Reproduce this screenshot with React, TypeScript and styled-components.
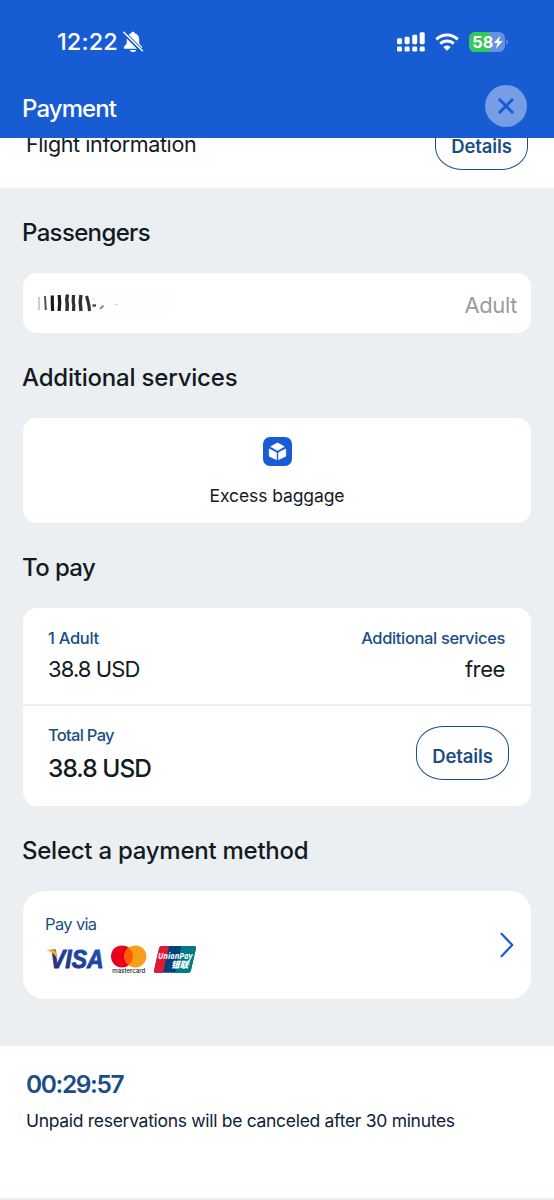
import React from 'react';
import styled, { createGlobalStyle } from 'styled-components';

const GlobalStyle = createGlobalStyle`
  * { box-sizing: border-box; }
  body {
    margin: 0;
    background: #fff;
    font-family: Inter, "Liberation Sans", sans-serif;
    color: #121b22;
    -webkit-font-smoothing: antialiased;
  }
`;

const Screen = styled.div`
  width: 554px;
  height: 1200px;
  display: flex;
  flex-direction: column;
  overflow: hidden;
  background: #fff;
`;

const Header = styled.header`
  height: 138px;
  flex: none;
  background: #175cd3;
  color: #fff;
`;

const StatusBar = styled.div`
  height: 82px;
  padding: 1px 46px 0 57px;
  display: flex;
  align-items: center;
  justify-content: space-between;
`;

const StatusGroup = styled.div<{ $gap: number }>`
  display: flex;
  align-items: center;
  gap: ${(p) => p.$gap}px;
`;

const TitleBar = styled.div`
  height: 48px;
  padding: 0 27px 0 22px;
  display: flex;
  align-items: center;
  justify-content: space-between;
`;

const CloseButton = styled.button`
  width: 42px;
  height: 42px;
  padding: 0;
  border: 0;
  border-radius: 50%;
  background: #779de5;
  display: grid;
  place-items: center;
`;

interface TextProps {
  $size: number;
  $weight?: number;
  $track?: number;
  $line?: number;
  $color?: string;
}

const Text = styled.span<TextProps>`
  display: block;
  white-space: nowrap;
  font-size: ${(p) => p.$size}px;
  font-weight: ${(p) => p.$weight ?? 400};
  letter-spacing: ${(p) => p.$track ?? 0}px;
  line-height: ${(p) => p.$line ?? 30}px;
  color: ${(p) => p.$color ?? 'inherit'};
`;

const PageTitle = styled(Text)`
  padding-top: 5px;
`;

const FlightRow = styled.section`
  height: 50px;
  flex: none;
  padding: 0 26px 18px;
  display: flex;
  align-items: flex-end;
  justify-content: space-between;
  overflow: hidden;
`;

const FlightLabel = styled(Text)`
  margin-bottom: 11px;
`;

const DetailsButton = styled.button`
  flex: none;
  width: 93px;
  height: 54px;
  padding: 5px 0 0;
  border: 1.5px solid #1a4f86;
  border-radius: 27px / 23px;
  background: #fff;
  color: #1a4f86;
  font: 600 18.5px/30px Inter, sans-serif;
  letter-spacing: -0.1px;
`;

const Main = styled.main`
  height: 858px;
  flex: none;
  padding: 0 23px;
  background: #ebeff2;
`;

const Heading = styled.h2<{ $track: number }>`
  margin: 0 0 0 -1px;
  height: 85px;
  padding-top: 5px;
  display: flex;
  align-items: center;
  font-size: 24px;
  font-weight: 500;
  line-height: 30px;
  letter-spacing: ${(p) => p.$track}px;
`;

const Card = styled.section<{ $height: number; $radius?: number }>`
  width: 508px;
  height: ${(p) => p.$height}px;
  border-radius: ${(p) => p.$radius ?? 14}px;
  background: #fff;
`;

const PassengerCard = styled(Card)`
  padding: 4px 14px 0 12px;
  display: flex;
  align-items: center;
  justify-content: space-between;
`;

const ServiceCard = styled(Card)`
  padding-top: 19px;
  display: flex;
  flex-direction: column;
  align-items: center;
  gap: 15px;
`;

const PriceRow = styled.div<{ $height: number; $pad: string }>`
  height: ${(p) => p.$height}px;
  padding: ${(p) => p.$pad};
  display: flex;
  justify-content: space-between;
  & + & { border-top: 2px solid #eceef0; }
`;

const PriceCell = styled.div<{ $end?: boolean; $gap: number }>`
  display: flex;
  flex-direction: column;
  align-items: ${(p) => (p.$end ? 'flex-end' : 'flex-start')};
  gap: ${(p) => p.$gap}px;
`;

const TotalCell = styled(PriceCell)`
  margin-top: -1px;
`;

const MethodCard = styled(Card)`
  padding: 0 17px 0 22px;
  display: flex;
  align-items: center;
  justify-content: space-between;
`;

const MethodInfo = styled.div`
  margin-top: -2px;
  display: flex;
  flex-direction: column;
  gap: 8px;
`;

const Footer = styled.footer`
  flex: 1;
  padding: 23px 26px 0;
  display: flex;
  flex-direction: column;
  gap: 7px;
`;

const BottomRule = styled.div`
  height: 2px;
  flex: none;
  background: #e9eeef;
`;

const NAVY = '#1a4f86';

const BellOff = () => (
  <svg width="20" height="22" viewBox="0 0 20 22">
    <path d="M10 .8c-.9 0-1.700.6-1.900 1.500C5 3.300 3.800 5.700 3.800 8.500v2.700c0 1.400-.7 2.300-1.700 3.400-.8.9-1.300 1.300-1.300 2.100 0 .7.5 1 1.200 1h16c.7 0 1.200-.3 1.200-1 0-.8-.5-1.200-1.300-2.100-1-1.100-1.700-2-1.700-3.400V8.500c0-2.800-1.200-5.200-4.300-6.200C11.700 1.400 10.900.8 10 .8z" fill="#fff" />
    <path d="M6.900 18.900h6.200c-.3 1.400-1.500 2.200-3.100 2.200s-2.800-.8-3.100-2.200z" fill="#fff" />
    <path d="M.2 1.200 19.800 20.800" stroke="#175cd3" strokeWidth="4" />
    <path d="M.8 1.200 19.400 19.800" stroke="#fff" strokeWidth="1.500" strokeLinecap="round" />
  </svg>
);

const Signal = () => (
  <svg width="28" height="20" viewBox="0 0 28 20" fill="#fff">
    <rect x="0" y="6.200" width="5" height="6" rx="1.400" />
    <rect x="7.600" y="4.800" width="5" height="7.400" rx="1.400" />
    <rect x="15.200" y="2.700" width="5" height="9.500" rx="1.400" />
    <rect x="22.700" y="0.200" width="5" height="12" rx="1.400" />
    <rect x="0" y="14.600" width="5" height="5" rx="1.400" />
    <rect x="7.600" y="14.600" width="5" height="5" rx="1.400" />
    <rect x="15.200" y="14.600" width="5" height="5" rx="1.400" />
    <rect x="22.700" y="14.600" width="5" height="5" rx="1.400" />
  </svg>
);

const Wifi = () => (
  <svg width="24" height="18" viewBox="0 0 24 18">
    <g fill="none" stroke="#fff" strokeWidth="3">
      <path d="M1.300 6.400a15.300 15.300 0 0 1 21.400 0" />
      <path d="M5.300 10.600a9.600 9.600 0 0 1 13.400 0" />
    </g>
    <path d="M12 17.700 8.300 14a5.300 5.300 0 0 1 7.400 0z" fill="#fff" />
  </svg>
);

const Battery = () => (
  <svg width="39" height="20" viewBox="0 0 39 20">
    <defs>
      <clipPath id="charge"><rect width="21" height="20" /></clipPath>
    </defs>
    <rect width="36" height="20" rx="6" fill="#6691e1" />
    <rect width="36" height="20" rx="6" fill="#34c759" clipPath="url(#charge)" />
    <path d="M37.200 7c1 .4 1.600 1.500 1.600 3s-.6 2.600-1.600 3z" fill="#6691e1" />
    <text x="3.300" y="16" fontFamily="Inter, sans-serif" fontSize="16.500" fontWeight="700" fill="#fff" textLength="21" lengthAdjust="spacingAndGlyphs">58</text>
    <path d="M31.200 3.800 24.800 11h3.700l-1.600 5.800 6.800-7.800h-3.900z" fill="#fff" />
  </svg>
);

const CloseIcon = () => (
  <svg width="16" height="16" viewBox="0 0 16 16">
    <path d="M1.800 1.800 14.200 14.200M14.200 1.800 1.800 14.200" stroke="#175cd3" strokeWidth="3" strokeLinecap="round" />
  </svg>
);

const MaskedName = () => (
  <svg width="140" height="44" viewBox="0 0 140 44" fill="none" stroke="#161c20">
    <path d="M0 12C4 4 22 5 62 4h76v22c0 8-40 8-80 8H12C4 34 0 26 0 12z" fill="#fefefe" stroke="none" />
    <path d="M4 14v13" strokeWidth="1.200" opacity=".35" />
    <path d="M10 13 10.800 27" strokeWidth="2" opacity=".75" />
    <path d="M17.300 12.500V19l.3 9" strokeWidth="3.200" />
    <path d="M24.200 12l.5 8-.6 8" strokeWidth="3.200" />
    <path d="M32.500 11.500 31.700 17l.6 4-.3 7" strokeWidth="3.400" opacity=".9" />
    <path d="M38.500 12l-.3 7 .6 3-.3 6" strokeWidth="3.200" opacity=".9" />
    <path d="M46 12l-.8 7 .8 9" strokeWidth="3.400" opacity=".9" />
    <path d="M51.500 13l1.200 4M52.700 17 54 23l.5 5" strokeWidth="3.100" opacity=".9" />
    <path d="M57.500 22.500h3.500" strokeWidth="2.400" opacity=".8" />
    <path d="M57.500 16h2.500" strokeWidth="1" opacity=".2" />
    <path d="M68.500 22.500 65 26" strokeWidth="1.800" opacity=".5" />
    <path d="M80 21.500h3" strokeWidth="1" opacity=".2" />
  </svg>
);

const BoxIcon = () => (
  <svg width="29" height="29" viewBox="0 0 29 29">
    <rect width="29" height="29" rx="7" fill="#175cd3" />
    <g fill="#fff" stroke="#fff" strokeWidth=".8" strokeLinejoin="round">
      <path d="M14.500 6 21.200 9.600 14.500 13.400 7.800 9.600z" />
      <path d="M6.300 12 13.400 15.700v6.900L6.300 19.200z" />
      <path d="M22.700 12 15.600 15.700v6.900l7.100-3.400z" />
    </g>
  </svg>
);

const CardBrands = () => (
  <svg width="154" height="32" viewBox="0 0 154 32">
    <defs>
      <linearGradient id="visa" x1="0" y1="1" x2="1" y2="0">
        <stop offset="0" stopColor="#20297c" />
        <stop offset="1" stopColor="#2157b8" />
      </linearGradient>
      <clipPath id="up"><path d="M117 3h32q2.400 0 1.900 2.400l-5 22q-.5 2.400-3 2.400h-32q-2.400 0-1.900-2.400l5-22Q114.500 3 117 3z" /></clipPath>
    </defs>
    <text x="5" y="24.700" fontFamily="Liberation Sans, sans-serif" fontStyle="italic" fontSize="25" fontWeight="700" fill="url(#visa)" stroke="url(#visa)" strokeWidth=".9" textLength="53.500" lengthAdjust="spacingAndGlyphs">VISA</text>
    <path d="M2 6.700h6.400q1.800 0 2.300 1.700l2 8.300Q9.500 9.600 2 7.200z" fill="#f2ae14" />
    <circle cx="77" cy="13.400" r="11" fill="#eb001b" />
    <circle cx="90.300" cy="13.400" r="11" fill="#f79e1b" />
    <path d="M83.650 4.640a11 11 0 0 1 0 17.520 11 11 0 0 1 0-17.520z" fill="#ff5f00" />
    <text x="67.300" y="29.600" fontFamily="Inter, sans-serif" fontSize="5.800" fontWeight="500" fill="#222" textLength="33" lengthAdjust="spacingAndGlyphs">mastercard</text>
    <g clipPath="url(#up)">
      <rect x="106" width="48" height="32" fill="#00447c" />
      <path d="M106 0h18.500l-7 32H106z" fill="#e21836" />
      <path d="M137 0h17v32h-24z" fill="#007b84" />
      <text x="113" y="16" fontFamily="Open Sans, sans-serif" fontStyle="italic" fontSize="9" fontWeight="700" fill="#fff" textLength="34.500" lengthAdjust="spacingAndGlyphs">UnionPay</text>
      <text x="126" y="25.400" fontFamily="Noto Sans CJK SC, sans-serif" fontStyle="italic" fontSize="8.800" fontWeight="900" fill="#fff">银联</text>
    </g>
  </svg>
);

const Chevron = () => (
  <svg width="14" height="26" viewBox="0 0 14 26">
    <path d="M1.500 1.800 12.300 13 1.500 24.200" fill="none" stroke="#175cd3" strokeWidth="2.200" strokeLinecap="round" strokeLinejoin="round" />
  </svg>
);

export default function App() {
  return (
    <Screen>
      <GlobalStyle />
      <Header>
        <StatusBar>
          <StatusGroup $gap={5}>
            <Text $size={23.5} $weight={500} $track={0.1}>12:22</Text>
            <BellOff />
          </StatusGroup>
          <StatusGroup $gap={10}>
            <Signal />
            <Wifi />
            <Battery />
          </StatusGroup>
        </StatusBar>
        <TitleBar>
          <PageTitle $size={24} $weight={500} $track={-0.9} $line={38}>Payment</PageTitle>
          <CloseButton aria-label="Close"><CloseIcon /></CloseButton>
        </TitleBar>
      </Header>
      <FlightRow>
        <FlightLabel $size={21.5} $track={-0.4}>Flight information</FlightLabel>
        <DetailsButton>Details</DetailsButton>
      </FlightRow>
      <Main>
        <Heading $track={-0.65}>Passengers</Heading>
        <PassengerCard $height={60}>
          <MaskedName />
          <Text $size={22} $track={-0.4} $color="#999b9d">Adult</Text>
        </PassengerCard>
        <Heading $track={-0.2}>Additional services</Heading>
        <ServiceCard $height={105}>
          <BoxIcon />
          <Text $size={17.5} $track={-0.1}>Excess baggage</Text>
        </ServiceCard>
        <Heading $track={-0.6}>To pay</Heading>
        <Card $height={198}>
          <PriceRow $height={96} $pad="20px 26px 0 25px">
            <PriceCell $gap={6}>
              <Text $size={16.5} $weight={500} $line={20} $color={NAVY} $track={-0.3}>1 Adult</Text>
              <Text $size={22} $track={-0.9}>38.8 USD</Text>
            </PriceCell>
            <PriceCell $end $gap={6}>
              <Text $size={16.5} $weight={500} $line={20} $color={NAVY} $track={-0.36}>Additional services</Text>
              <Text $size={22} $track={-0.4}>free</Text>
            </PriceCell>
          </PriceRow>
          <PriceRow $height={102} $pad="20px 22px 0 25px">
            <TotalCell $gap={8}>
              <Text $size={16.5} $weight={500} $line={20} $color={NAVY} $track={-0.7}>Total Pay</Text>
              <Text $size={24.5} $weight={500} $track={-0.95}>38.8 USD</Text>
            </TotalCell>
            <DetailsButton>Details</DetailsButton>
          </PriceRow>
        </Card>
        <Heading $track={-0.25}>Select a payment method</Heading>
        <MethodCard $height={108} $radius={21}>
          <MethodInfo>
            <Text $size={16.5} $line={22} $color={NAVY} $track={-0.65}>Pay via</Text>
            <CardBrands />
          </MethodInfo>
          <Chevron />
        </MethodCard>
      </Main>
      <Footer>
        <Text $size={24.5} $weight={600} $color={NAVY} $track={-1.4}>00:29:57</Text>
        <Text $size={17.5} $color="#0d2238" $track={-0.3}>Unpaid reservations will be canceled after 30 minutes</Text>
      </Footer>
      <BottomRule />
    </Screen>
  );
}
